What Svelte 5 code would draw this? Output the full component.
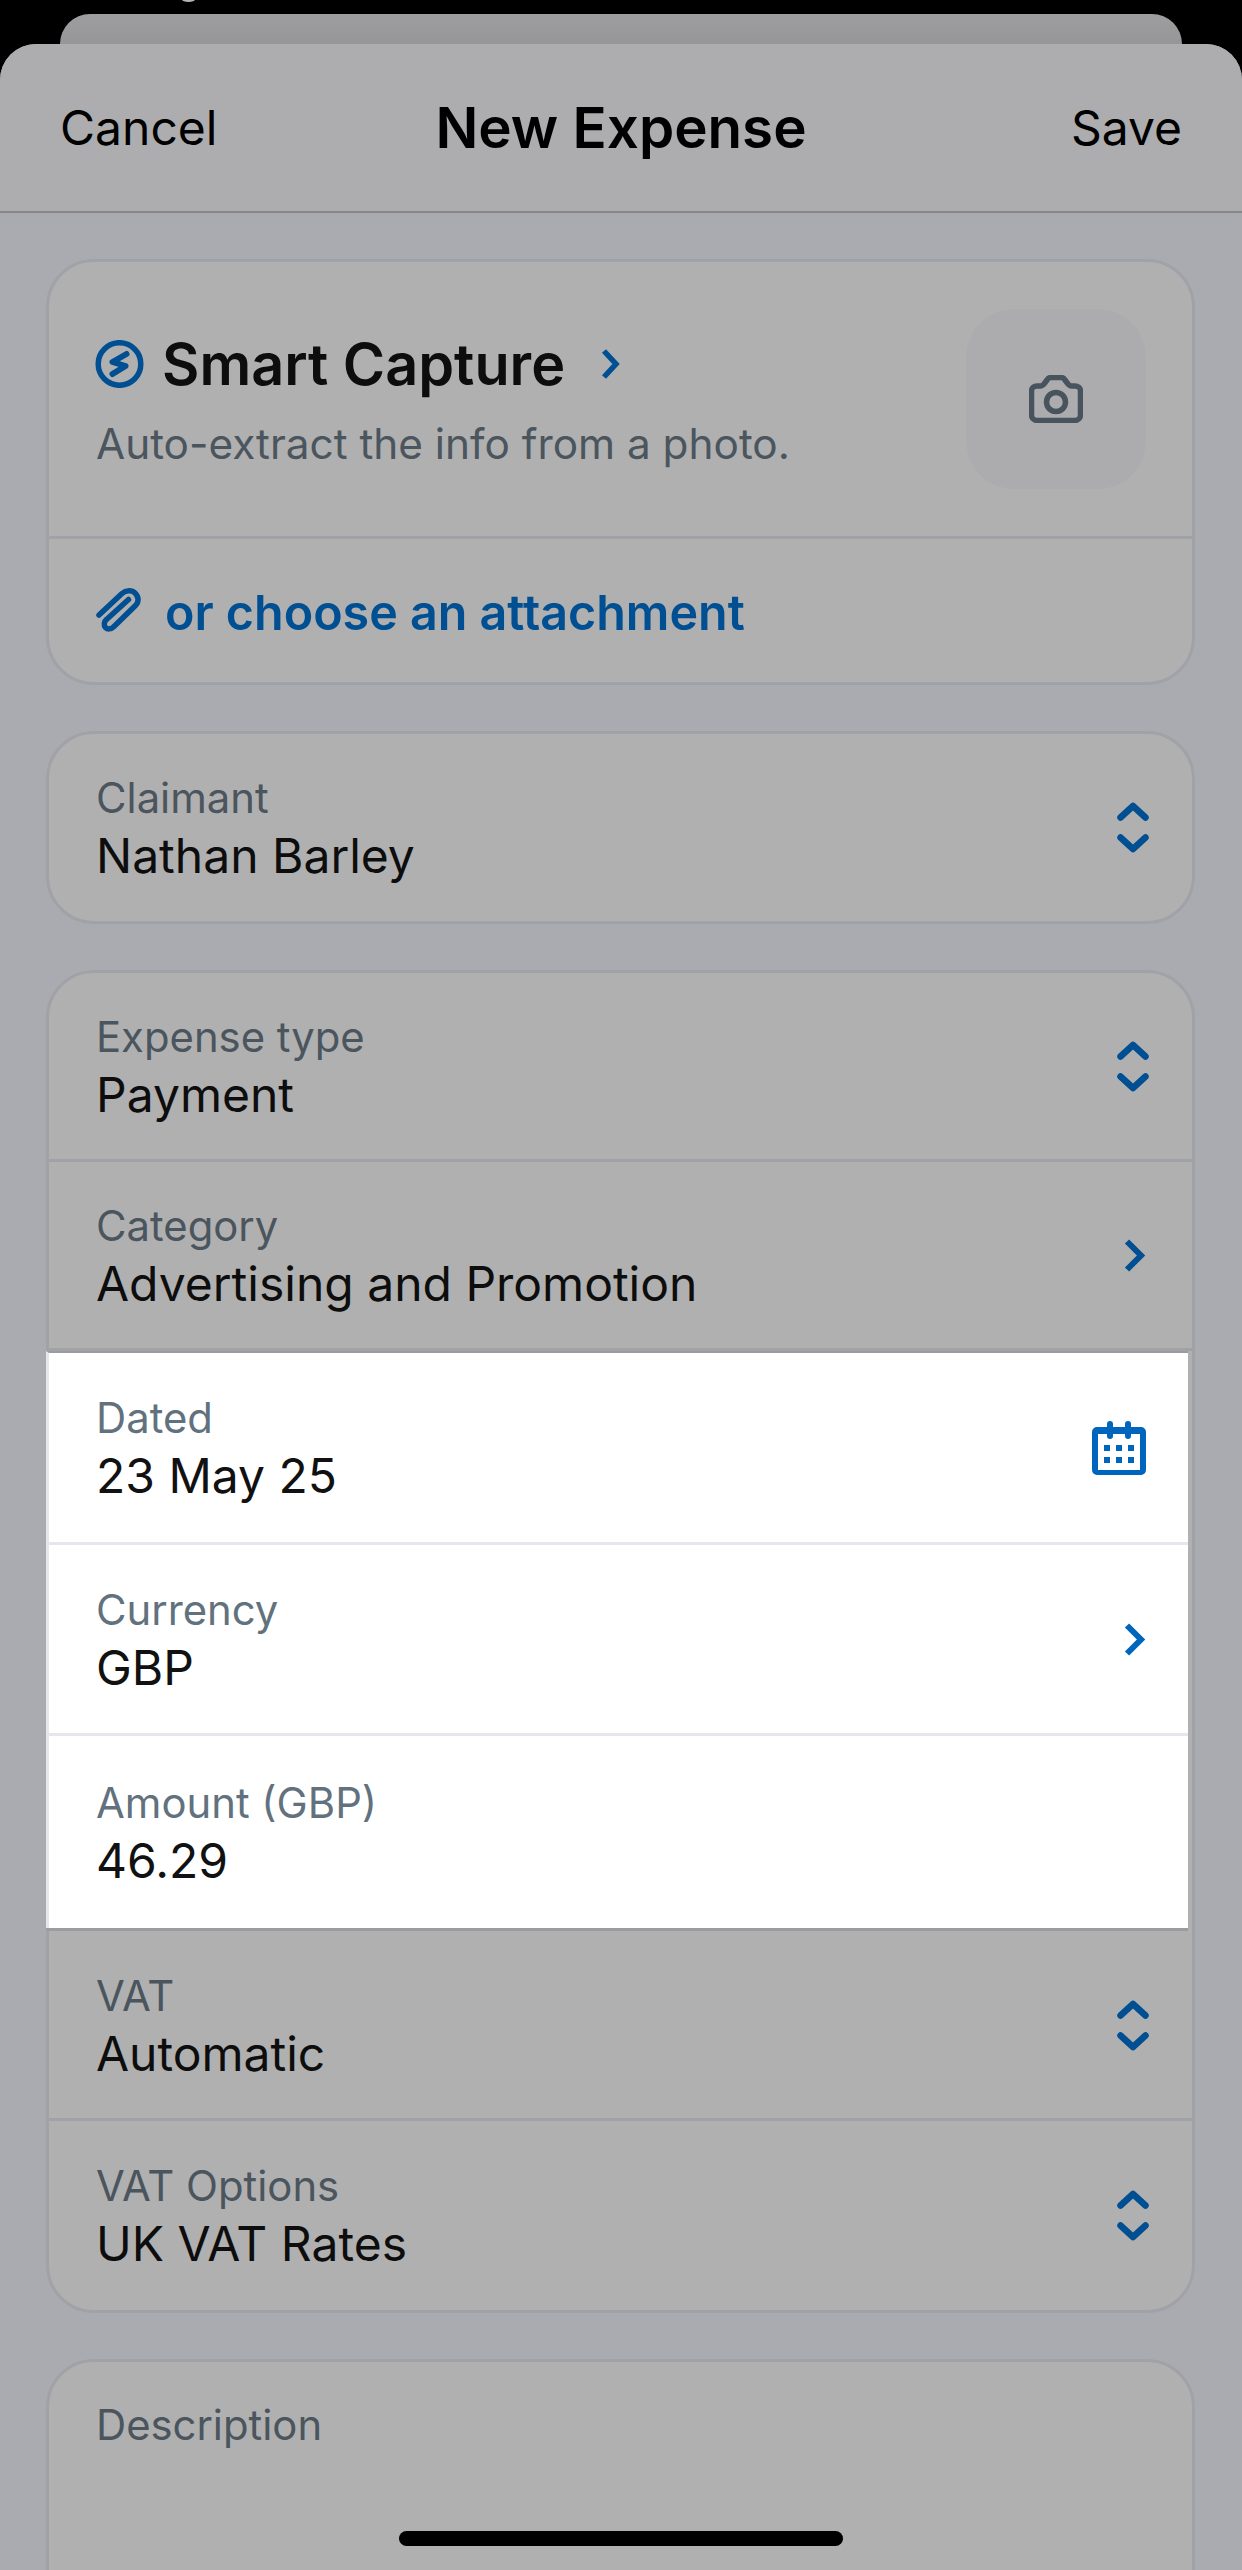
<script>
	const groupTop = [
		{ label: 'Expense type', value: 'Payment', icon: 'updown' },
		{ label: 'Category', value: 'Advertising and Promotion', icon: 'chevron' }
	];
	const groupLit = [
		{ label: 'Dated', value: '23 May 25', icon: 'calendar' },
		{ label: 'Currency', value: 'GBP', icon: 'chevron' },
		{ label: 'Amount (GBP)', value: '46.29', icon: '' }
	];
	const groupEnd = [
		{ label: 'VAT', value: 'Automatic', icon: 'updown' },
		{ label: 'VAT Options', value: 'UK VAT Rates', icon: 'updown' }
	];
</script>

{#snippet icon(name)}
	{#if name === 'updown'}
		<svg width="32" height="51" viewBox="0 0 32 51" fill="none" stroke="currentColor" stroke-width="6.5" stroke-linecap="round" stroke-linejoin="round">
			<path d="M3.5 15.5 16 4 28.5 15.5" />
			<path d="M3.5 35.5 16 47 28.5 35.5" />
		</svg>
	{:else if name === 'chevron'}
		<svg width="32" height="33" viewBox="0 0 32 33" fill="none" stroke="currentColor" stroke-width="6">
			<path d="M10 2.5 24 16.5 10 30.5" />
		</svg>
	{:else if name === 'calendar'}
		<svg class="cal" width="54" height="54" viewBox="0 0 54 54" fill="currentColor">
			<path fill-rule="evenodd" d="M5 6h44a5 5 0 0 1 5 5v38a5 5 0 0 1-5 5H5a5 5 0 0 1-5-5V11a5 5 0 0 1 5-5Zm1 7v36h42V13Z" />
			<rect x="15" y="0" width="6" height="18" rx="3" />
			<rect x="33" y="0" width="6" height="18" rx="3" />
			<rect x="12" y="24" width="6" height="6" />
			<rect x="24" y="24" width="6" height="6" />
			<rect x="36" y="24" width="6" height="6" />
			<rect x="12" y="36" width="6" height="6" />
			<rect x="24" y="36" width="6" height="6" />
			<rect x="36" y="36" width="6" height="6" />
		</svg>
	{/if}
{/snippet}

{#snippet row(item)}
	<div class="row">
		<div class="text">
			<span class="label">{item.label}</span>
			<span class="value">{item.value}</span>
		</div>
		{@render icon(item.icon)}
	</div>
{/snippet}

<div class="screen">
	<div class="peek"></div>
	<div class="back-sheet"></div>
	<div class="sheet">
		<header>
			<span class="action">Cancel</span>
			<h1>New Expense</h1>
			<span class="action save">Save</span>
		</header>

		<main>
			<section class="card">
				<div class="capture">
					<div>
						<div class="capture-title">
							<svg width="49" height="48" viewBox="0 0 49 48" fill="none">
								<circle cx="24.5" cy="24" r="21.3" stroke="#004f93" stroke-width="5.5" />
								<path d="M31.5 14 17.5 22 30.5 26 17.5 34" stroke="#004f93" stroke-width="6" stroke-linecap="round" stroke-linejoin="round" />
							</svg>
							<span>Smart Capture</span>
							<svg class="title-chev" width="20" height="30" viewBox="0 0 20 30" fill="none" stroke="#004f93" stroke-width="5.5">
								<path d="M3 2 15 15 3 28" />
							</svg>
						</div>
						<p>Auto-extract the info from a photo.</p>
					</div>
					<div class="camera">
						<svg width="54" height="48" viewBox="0 0 54 48" fill="none" stroke="#47535d" stroke-width="5.5" stroke-linejoin="round">
							<path d="M8 11h4c1 0 2-1 3-2l3-4c1-2 2-2.500 4-2.500h10c2 0 3 .5 4 2.500l3 4c1 1 2 2 3 2h4c3 0 5.500 2 5.500 5v24c0 3-2.500 5.500-5.500 5.500H8c-3 0-5.500-2.500-5.500-5.500V16c0-3 2.500-5 5.500-5Z" />
							<circle cx="27" cy="27" r="9.5" />
						</svg>
					</div>
				</div>
				<div class="attach">
					<svg width="48" height="48" viewBox="0 0 48 48" fill="none" stroke="#004f93" stroke-width="5.5" stroke-linecap="round" stroke-linejoin="round">
						<path d="M4 28 27 6.500C31 3 37 3 40 6c4 4 4 9 .5 12.500L19 39.500c-3 3-6.500 3-8.500 1s-1.500-6 1-8L33.500 12.500" />
					</svg>
					<span>or choose an attachment</span>
				</div>
			</section>

			<section class="card solo">
				{@render row({ label: 'Claimant', value: 'Nathan Barley', icon: 'updown' })}
			</section>

			<section class="card">
				{#each groupTop as item}
					{@render row(item)}
				{/each}
				<div class="lit">
					{#each groupLit as item}
						{@render row(item)}
					{/each}
				</div>
				{#each groupEnd as item}
					{@render row(item)}
				{/each}
			</section>

			<section class="card description">
				<span class="label">Description</span>
			</section>
		</main>
		<div class="home-bar"></div>
	</div>
</div>

<style>
	:global(body) {
		margin: 0;
		background: #000;
		font-family: Inter, "Liberation Sans", sans-serif;
	}

	.screen {
		position: relative;
		height: 2570px;
		overflow: hidden;
		background: #000;
	}

	/* tail of the status bar text that is cut off by the top edge */
	.peek {
		position: absolute;
		top: -3px;
		left: 182px;
		width: 13px;
		height: 5px;
		background: #b5b5b5;
		border-radius: 50%;
	}

	.back-sheet {
		height: 30px;
		margin: 14px 60px 0;
		background: linear-gradient(#9e9ea0, #969698);
		border-radius: 30px 30px 0 0;
	}

	.sheet {
		position: relative;
		height: 2526px;
		overflow: hidden;
		background: #aaabb0;
		border-radius: 36px 36px 0 0;
	}

	header {
		display: grid;
		grid-template-columns: 1fr auto 1fr;
		align-items: center;
		box-sizing: border-box;
		height: 169px;
		padding: 0 60px;
		background: #adadaf;
		border-bottom: 2px solid #87878b;
	}

	h1 {
		margin: 0;
		font-size: 56.5px;
		font-weight: 600;
		color: #000;
	}

	.action {
		font-size: 48px;
		color: #000;
	}

	.save {
		text-align: right;
	}

	main {
		display: flex;
		flex-direction: column;
		gap: 46px;
		padding: 46px 47px 0 46px;
	}

	.card {
		background: #b0b0b0;
		border: 3px solid #a1a2a7;
		border-radius: 48px;
	}

	.capture {
		display: flex;
		align-items: center;
		justify-content: space-between;
		box-sizing: border-box;
		height: 277px;
		padding: 0 46px;
		border-bottom: 3px solid #a1a2a7;
	}

	.capture-title {
		display: flex;
		align-items: center;
		font-size: 57.5px;
		font-weight: 600;
		color: #0d0d0d;
	}

	.capture-title span {
		margin-left: 18px;
	}

	.title-chev {
		margin-left: 36px;
	}

	.capture p {
		margin: 19px 0 0 1px;
		font-size: 42.3px;
		color: #4b555e;
	}

	.camera {
		display: flex;
		align-items: center;
		justify-content: center;
		width: 180px;
		height: 180px;
		background: #acacae;
		border-radius: 48px;
	}

	.attach {
		display: flex;
		align-items: center;
		gap: 22px;
		height: 143px;
		padding: 0 46px;
		font-size: 48.4px;
		font-weight: 600;
		color: #004f93;
	}

	.attach span {
		margin-top: 4px;
	}

	.row {
		display: flex;
		align-items: center;
		justify-content: space-between;
		box-sizing: border-box;
		height: 189px;
		padding: 0 43px 0 47px;
		border-bottom: 3px solid #a1a2a7;
		color: #004f93;
	}

	.row:last-child {
		border-bottom: 0;
	}

	.solo .row {
		height: 187px;
	}

	.text {
		display: flex;
		flex-direction: column;
		gap: 3px;
		margin-top: 4px;
	}

	.label {
		font-size: 41.8px;
		line-height: 50px;
		color: #4b555e;
	}

	.value {
		font-size: 48px;
		line-height: 60px;
		color: #0d0d0d;
	}

	.lit {
		margin: 0 4px 4px -3px;
		background: #fff;
		border-left: 3px solid #e6e6ee;
		border-top: 2px solid #9b9ca0;
		box-shadow: 0 3px 0 #9b9ca0;
	}

	.lit .row {
		height: 192px;
		padding-right: 39px;
		color: #0065bd;
		border-bottom-color: #e6e6ee;
	}

	.lit .row:nth-child(2) {
		height: 191px;
	}

	.cal {
		margin-right: 3px;
	}

	.lit .label {
		color: #62717e;
	}

	.lit .value {
		color: #111;
	}

	.description {
		height: 400px;
		padding: 38px 47px;
	}

	.home-bar {
		position: absolute;
		left: 399px;
		bottom: 24px;
		width: 444px;
		height: 15px;
		background: #000;
		border-radius: 8px;
	}
</style>
